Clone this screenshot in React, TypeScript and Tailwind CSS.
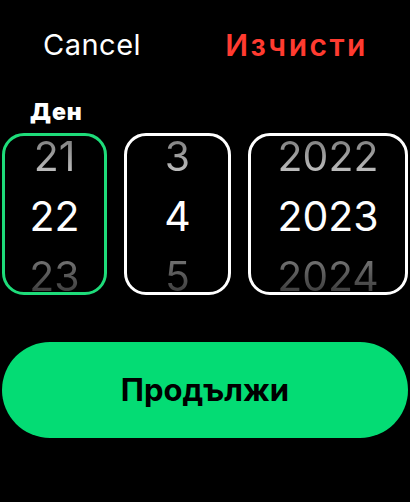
const FONT = "font-['Inter','Roboto',sans-serif]";

type Column = {
  values: [string, string, string];
  width: string;
  border: string;
};

const COLUMNS: Column[] = [
  { values: ["21", "22", "23"], width: "w-[105px]", border: "border-[#1edc7a]" },
  { values: ["3", "4", "5"], width: "w-[107px]", border: "border-white" },
  { values: ["2022", "2023", "2024"], width: "w-[160px]", border: "border-white" },
];

function Wheel({ col }: { col: Column }) {
  const [prev, current, next] = col.values;
  return (
    <div
      className={`flex h-[162px] ${col.width} flex-col items-center justify-center overflow-hidden rounded-[22px] border-[3px] ${col.border} pt-1`}
    >
      <div className="flex h-[60px] shrink-0 items-center bg-gradient-to-b from-[#6a6a6a] to-[#d8d8d8] bg-clip-text text-[41px] leading-[60px] text-transparent">
        {prev}
      </div>
      <div className="flex h-[60px] shrink-0 items-center text-[41px] leading-[60px] text-white">
        {current}
      </div>
      <div className="flex h-[60px] shrink-0 items-center bg-gradient-to-b from-[#8a8a8a] to-[#2a2a2a] bg-clip-text text-[41px] leading-[60px] text-transparent">
        {next}
      </div>
    </div>
  );
}

export default function App() {
  return (
    <div lang="bg" className={`flex h-[502px] w-[410px] flex-col bg-black ${FONT}`}>
      {/* Header actions */}
      <div className="flex items-center pt-[27px]">
        <button className="ml-[43px] text-[29px] leading-[36px] tracking-[0.5px] text-white">Cancel</button>
        <button className="ml-auto mr-[42px] text-[30px] font-semibold leading-[36px] tracking-[2.5px] text-[#ff3b30]">
          Изчисти
        </button>
      </div>

      <p className="mt-[36px] pl-[30px] text-[23px] font-black leading-[26px] tracking-[1px] text-white">Ден</p>

      {/* Date wheels */}
      <div className="mt-[8px] flex gap-[17px] px-[2px]">
        {COLUMNS.map((col) => (
          <Wheel key={col.values[1]} col={col} />
        ))}
      </div>

      <button className="mx-[2px] mt-[47px] flex h-[96px] items-center justify-center rounded-full bg-[#04dc74] text-[31px] font-bold text-black">
        Продължи
      </button>
    </div>
  );
}
